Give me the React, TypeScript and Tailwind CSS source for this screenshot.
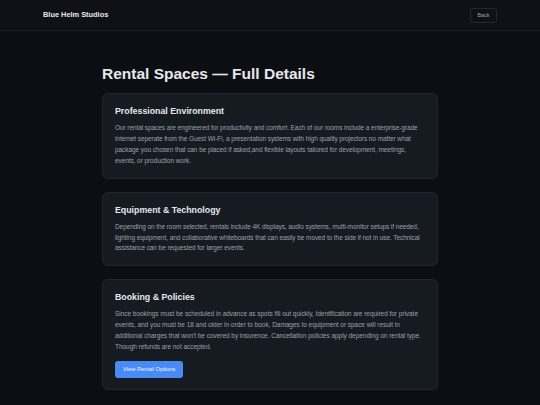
const sections = [
  {
    title: 'Professional Environment',
    body: 'Our rental spaces are engineered for productivity and comfort. Each of our rooms include a enterprise-grade internet seperate from the Guest Wi-Fi, a presentation systems with high quality projectors no matter what package you chosen that can be placed if asked,and flexible layouts tailored for development, meetings, events, or production work.',
    tight: true,
  },
  {
    title: 'Equipment & Technology',
    body: 'Depending on the room selected, rentals include 4K displays, audio systems, multi-monitor setups if needed, lighting equipment, and collaborative whiteboards that can easily be moved to the side if not in use. Technical assistance can be requested for larger events.',
    tight: true,
  },
  {
    title: 'Booking & Policies',
    body: "Since bookings must be scheduled in advance as spots fill out quickly, Identification are required for private events, and you must be 18 and older in order to book, Damages to equipment or space will result in additional charges that won't be covered by insurence. Cancellation policies apply depending on rental type. Though refunds are not accepted.",
    action: 'View Rental Options',
    tight: false,
  },
]

export default function App() {
  return (
    <div className="min-h-screen bg-[#0c0e13] font-['Liberation_Sans',Arial,sans-serif]">
      <header className="h-[31px] bg-[#0f1116] border-b border-[#1a1d24] px-[43px] flex items-center justify-between">
        <span className="text-[7.4px] font-bold text-[#e5e7eb]">Blue Helm Studios</span>
        <button className="h-[15px] w-[27px] rounded-[3px] border border-[#242833] text-[5.5px] text-[#9ca3af] flex items-center justify-center">
          Back
        </button>
      </header>

      <main className="max-w-[336px] mx-auto pt-[33px] pb-[16px]">
        <h1 className="text-[15.5px] leading-[19px] font-bold text-[#e6e8eb] mb-[10px]">
          Rental Spaces — Full Details
        </h1>

        <div className="flex flex-col gap-[13px]">
          {sections.map((s) => (
            <section
              key={s.title}
              className="bg-[#161b22] border border-[#222831] rounded-[6px] px-[12px] pt-[11px] pb-[11px]"
            >
              <h2 className="text-[8.8px] leading-[12px] font-bold text-[#e6e8eb] mb-[6px]">{s.title}</h2>
              <p
                className={
                  s.tight
                    ? 'text-[6.5px] leading-[10.9px] tracking-[-0.08px] text-[#9aa1ab]'
                    : 'text-[6.5px] leading-[10.9px] tracking-[-0.04px] text-[#9aa1ab]'
                }
              >
                {s.body}
              </p>
              {s.action && (
                <button className="mt-[8.5px] h-[16.5px] px-[8px] rounded-[3px] bg-[#4a8af4] text-[5.8px] font-medium text-[#eef3ff]">
                  {s.action}
                </button>
              )}
            </section>
          ))}
        </div>
      </main>
    </div>
  )
}
